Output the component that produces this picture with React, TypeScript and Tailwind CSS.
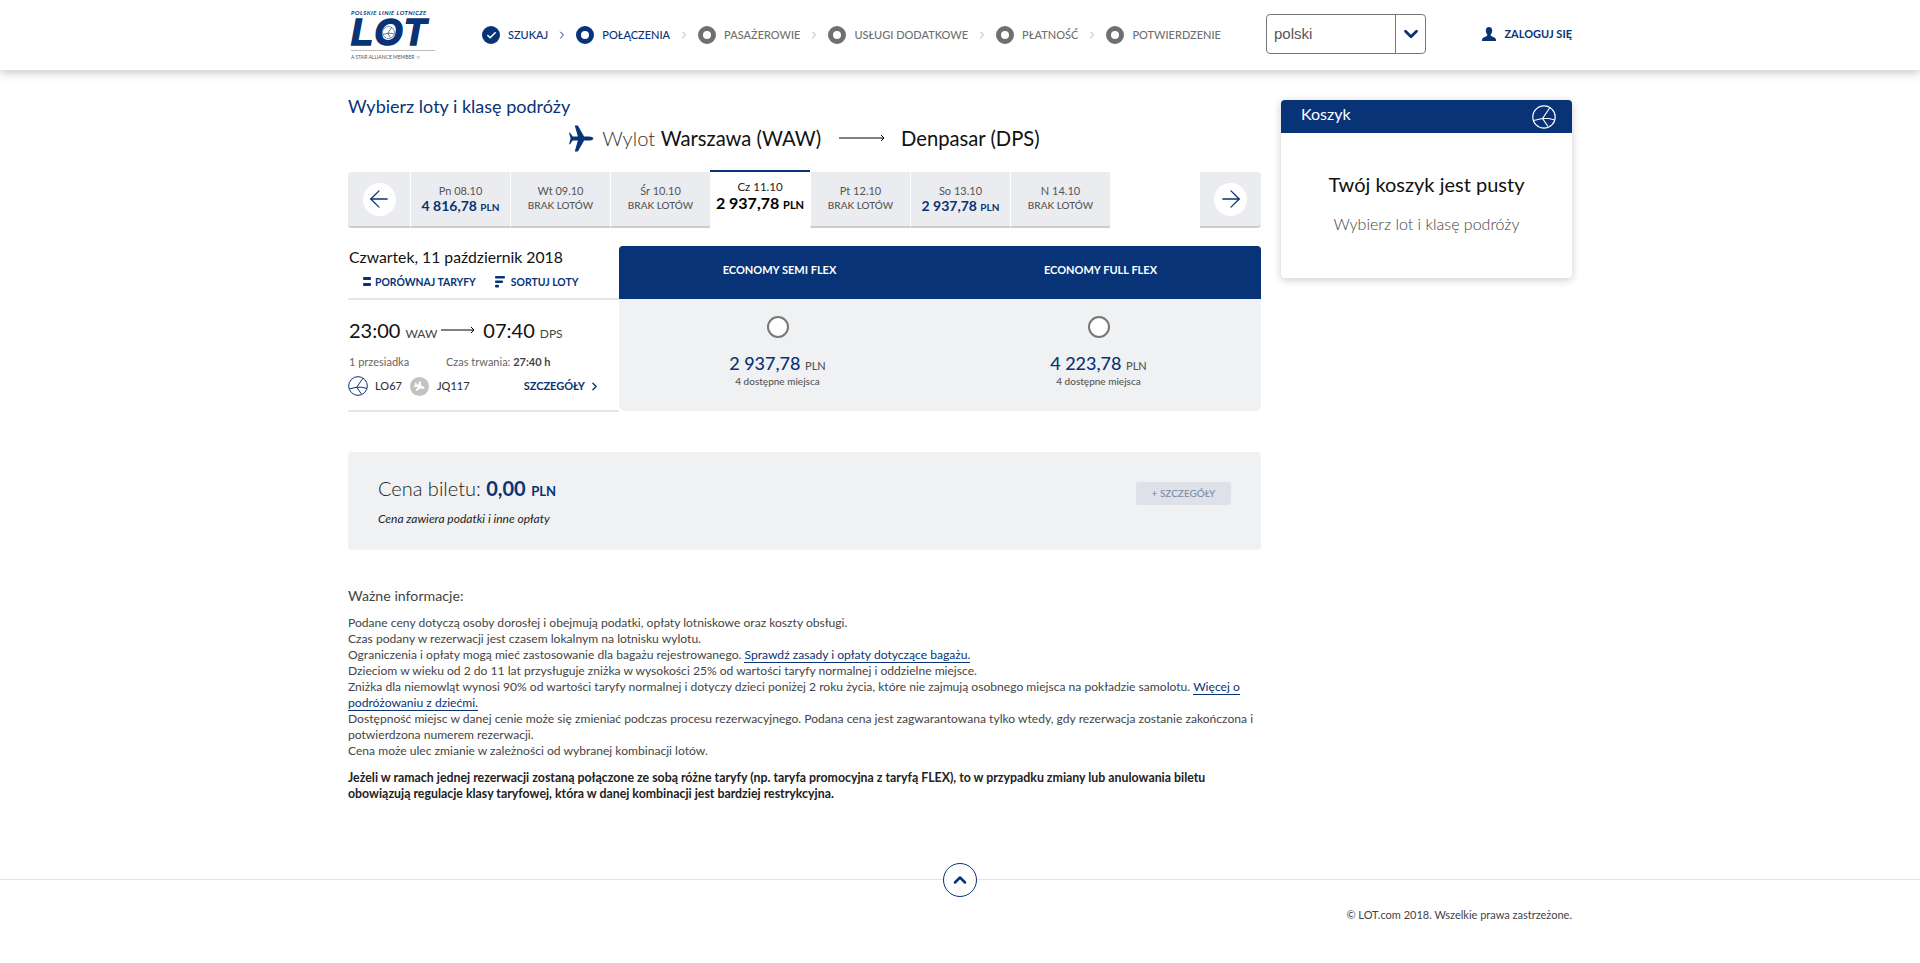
import React from 'react';
import { ArrowLeft, ArrowRight, ChevronDown, ChevronRight, ChevronUp, Check } from 'lucide-react';
import { FaPlane } from 'react-icons/fa';

const days = [
  { day: 'Pn 08.10', price: '4 816,78' },
  { day: 'Wt 09.10' },
  { day: 'Śr 10.10' },
  { day: 'Cz 11.10', price: '2 937,78', active: true },
  { day: 'Pt 12.10' },
  { day: 'So 13.10', price: '2 937,78' },
  { day: 'N 14.10' },
];

const steps = [
  { label: 'SZUKAJ', state: 'done' },
  { label: 'POŁĄCZENIA', state: 'current' },
  { label: 'PASAŻEROWIE', state: 'next' },
  { label: 'USŁUGI DODATKOWE', state: 'next' },
  { label: 'PŁATNOŚĆ', state: 'next' },
  { label: 'POTWIERDZENIE', state: 'next' },
];

const fares = [
  { price: '2 937,78' },
  { price: '4 223,78' },
];

const Crane = ({ className }: { className: string }) => (
  <svg viewBox="0 0 24 24" fill="none" stroke="currentColor" strokeWidth="1.2" className={className}>
    <circle cx="12" cy="12" r="11.2" />
    <path d="M18 2.5 L10.5 13.5 L1.5 15.5 M10.5 13.5 L17 13.5 L22.5 15 M10.5 13.5 L16 21.5" />
  </svg>
);

const Logo = () => (
  <div className="w-[84px] h-[54px] mt-[2px] flex flex-col text-[#083376]">
    <div className="h-[7px] text-[6px] leading-[7px] font-bold italic whitespace-nowrap tracking-[0.45px]">POLSKIE LINIE LOTNICZE</div>
    <div className="relative h-[27px] mt-[1px] font-['Liberation_Sans',sans-serif] text-[36px] leading-[31px] font-bold italic whitespace-nowrap [-webkit-text-stroke:1.6px_#083376] tracking-[1.5px]">
      LOT
      <Crane className="absolute left-[31px] top-[9px] w-[13px] h-[13px] rounded-full bg-white text-[#083376]" />
    </div>
    <div className="mt-[6px] border-t border-[#bbbbbb] pt-[3px] text-[5px] leading-[6px] text-[#555555] whitespace-nowrap">A STAR ALLIANCE MEMBER ☆</div>
  </div>
);

const Header = () => (
  <header className="h-[70px] bg-white shadow-[0_2px_10px_rgba(0,0,0,0.25)] relative">
    <div className="w-[1224px] mx-auto h-full flex items-center">
      <div className="ml-[3px] mr-[47px]"><Logo /></div>
      <nav className="flex items-center w-[784px]">
        {steps.map((s, i) => (
          <React.Fragment key={s.label}>
            {i > 0 && (
              <ChevronRight
                size={12}
                strokeWidth={2}
                className={`mx-[8px] ${s.state === 'next' ? 'text-[#b0b0b0]' : 'text-[#083376]'}`}
              />
            )}
            {s.state === 'done' ? (
              <span className="w-[18px] h-[18px] rounded-full bg-[#083376] flex items-center justify-center">
                <Check size={11} strokeWidth={3.5} className="text-white" />
              </span>
            ) : (
              <span className={`w-[18px] h-[18px] rounded-full bg-white border-[5px] ${s.state === 'current' ? 'border-[#083376]' : 'border-[#6f6f6f]'}`} />
            )}
            <span className={`ml-[8px] text-[11px] font-medium whitespace-nowrap ${s.state === 'next' ? 'text-[#6f6f6f]' : 'text-[#083376]'}`}>{s.label}</span>
          </React.Fragment>
        ))}
      </nav>
      <div className="w-[160px] h-[40px] mb-[2px] border border-[#777777] rounded-[4px] flex items-center">
        <span className="flex-1 pl-[7px] font-['Liberation_Sans',sans-serif] text-[15px] text-[#555555]">polski</span>
        <span className="w-[30px] h-full border-l border-[#777777] flex items-center justify-center">
          <ChevronDown size={22} strokeWidth={3} className="text-[#083376]" />
        </span>
      </div>
      <div className="ml-auto flex items-center gap-[8px] pb-[2px]">
        <svg viewBox="0 0 14 14" className="w-[14px] h-[14px] text-[#083376]" fill="currentColor">
          <path d="M7 0 C9 0 10.2 1.4 10.2 3.6 C10.2 5.4 9.4 7 8.6 7.8 C8.6 8.8 9 9 10.6 9.8 C12.6 10.6 14 11.2 14 13 V14 H0 V13 C0 11.2 1.4 10.6 3.4 9.8 C5 9 5.4 8.8 5.4 7.8 C4.6 7 3.8 5.4 3.8 3.6 C3.8 1.4 5 0 7 0 Z" />
        </svg>
        <span className="text-[11px] font-bold text-[#083376]">ZALOGUJ SIĘ</span>
      </div>
    </div>
  </header>
);

const DateTabs = () => (
  <div className="flex h-[56px] mt-[19px]">
    <div className="w-[62px] bg-[#ebecef] border-b-2 border-[#cbccd2] rounded-l-[4px] flex items-center justify-center">
      <span className="w-[33px] h-[33px] rounded-full bg-white flex items-center justify-center">
        <ArrowLeft size={28} strokeWidth={1.1} className="text-[#083376]" />
      </span>
    </div>
    {days.map(d => (
      <div
        key={d.day}
        className={`w-[100px] flex flex-col items-center ${d.active ? 'bg-white border-t-2 border-[#083376] -mt-[2px] h-[58px] pt-[8px]' : 'bg-[#ebecef] border-b-2 border-l border-[#cbccd2] border-l-white pt-[12px]'}`}
      >
        <span className={`leading-[14px] ${d.active ? 'text-[11.5px] text-[#222222]' : 'text-[11px] text-[#555555]'}`}>{d.day}</span>
        {d.price ? (
          <span className={`font-bold whitespace-nowrap ${d.active ? 'text-[16px] leading-[17px] text-black' : 'text-[14px] leading-[15px] text-[#083376]'}`}>
            {d.price} <span className={d.active ? 'text-[11px]' : 'text-[10px]'}>PLN</span>
          </span>
        ) : (
          <span className="text-[10px] leading-[15px] font-medium text-[#555555]">BRAK LOTÓW</span>
        )}
      </div>
    ))}
    <div className="ml-auto w-[61px] bg-[#ebecef] border-b-2 border-[#cbccd2] rounded-r-[4px] flex items-center justify-center">
      <span className="w-[33px] h-[33px] rounded-full bg-white flex items-center justify-center">
        <ArrowRight size={28} strokeWidth={1.1} className="text-[#083376]" />
      </span>
    </div>
  </div>
);

const FlightRow = () => (
  <div className="flex mt-[18px]">
    <div className="w-[271px]">
      <div className="h-[54px] border-b-2 border-[#e6e7ec] pt-[1px]">
        <div className="pl-[1px] text-[15.75px] leading-[20px] text-[#111111]">Czwartek, 11 październik 2018</div>
        <div className="flex mt-[8px] pl-[15px] gap-[19px] text-[10.4px] leading-[14px] font-bold text-[#083376]">
          <span className="flex items-center gap-[4px]">
            <svg viewBox="0 0 8 10" className="w-[8px] h-[10px]" fill="currentColor"><rect width="8" height="3" rx="1" /><rect y="6" width="8" height="3" rx="1" /></svg>
            PORÓWNAJ TARYFY
          </span>
          <span className="flex items-center gap-[6px]">
            <svg viewBox="0 0 10 12" className="w-[10px] h-[12px]" fill="currentColor"><rect width="10" height="2.6" rx="1" /><rect y="4.4" width="8" height="2.6" rx="1" /><rect y="8.8" width="4" height="2.6" rx="1" /></svg>
            SORTUJ LOTY
          </span>
        </div>
      </div>
      <div className="h-[112px] border-b-2 border-[#e6e7ec] pt-[17px]">
        <div className="flex items-baseline text-[#111111]">
          <span className="pl-[1px] text-[20px] leading-[26px]">23:00</span>
          <span className="ml-[5px] text-[12px] text-[#444444]">WAW</span>
          <svg viewBox="0 0 34 8" className="w-[34px] h-[8px] mx-[4px] self-center text-black" fill="none" stroke="currentColor"><path d="M0 4 H33 M30 1 L33 4 L30 7" /></svg>
          <span className="ml-[4px] text-[20px] leading-[26px]">07:40</span>
          <span className="ml-[5px] text-[12px] text-[#444444]">DPS</span>
        </div>
        <div className="flex mt-[12px] text-[11px] leading-[14px] text-[#666666]">
          <span className="w-[98px] pl-[1px]">1 przesiadka</span>
          <span>Czas trwania: <span className="font-bold text-[#444444]">27:40 h</span></span>
        </div>
        <div className="flex items-center mt-[7px] text-[11px] font-medium text-[#333333]">
          <Crane className="w-[20px] h-[20px] text-[#083376]" />
          <span className="ml-[7px]">LO67</span>
          <span className="ml-[8px] w-[19px] h-[19px] rounded-full bg-[#c2c2c2] flex items-center justify-center">
            <FaPlane size={11} className="text-white rotate-[20deg]" />
          </span>
          <span className="ml-[8px]">JQ117</span>
          <span className="ml-auto mr-[18px] flex items-center gap-[3px] font-bold text-[#083376]">
            SZCZEGÓŁY <ChevronRight size={13} strokeWidth={2.5} />
          </span>
        </div>
      </div>
    </div>
    <div className="flex-1">
      <div className="h-[53px] bg-[#083376] rounded-t-[4px] grid grid-cols-2 items-center text-center pb-[5px] text-[11px] font-bold text-white">
        <span>ECONOMY SEMI FLEX</span>
        <span>ECONOMY FULL FLEX</span>
      </div>
      <div className="h-[112px] bg-[#f0f1f3] rounded-b-[6px] grid grid-cols-2 text-center">
        {fares.map(f => (
          <div key={f.price} className="flex flex-col items-center pt-[17px] pr-[4px]">
            <span className="w-[22px] h-[22px] rounded-full border-2 border-[#777777] bg-white" />
            <span className="mt-[15px] text-[18px] leading-[20px] text-[#083376] font-medium whitespace-nowrap">
              {f.price} <span className="text-[11px] text-[#555555]">PLN</span>
            </span>
            <span className="-mt-[1px] text-[10px] leading-[12px] font-medium text-[#555555]">4 dostępne miejsca</span>
          </div>
        ))}
      </div>
    </div>
  </div>
);

const PriceBox = () => (
  <div className="mt-[40px] h-[98px] bg-[#f0f1f3] rounded-[4px] flex justify-between pl-[30px] pr-[30px] pt-[24px]">
    <div>
      <div className="text-[20px] leading-[24px] font-light text-[#222222]">
        Cena biletu: <span className="font-bold text-[#083376]">0,00</span> <span className="text-[13px] font-bold text-[#083376]">PLN</span>
      </div>
      <div className="mt-[8px] text-[12px] leading-[16px] italic text-[#222222]">Cena zawiera podatki i inne opłaty</div>
    </div>
    <div className="w-[95px] h-[23px] mt-[6px] bg-[#dfe1e8] rounded-[3px] flex items-center justify-center text-[10px] font-medium text-[#7d8aa5]">+ SZCZEGÓŁY</div>
  </div>
);

const Info = () => (
  <div className="mt-[37px] text-[#444444]">
    <h3 className="text-[14.2px] leading-[18px] text-[#444444]">Ważne informacje:</h3>
    <div className="mt-[10px] text-[12.1px] leading-[16px]">
      Podane ceny dotyczą osoby dorosłej i obejmują podatki, opłaty lotniskowe oraz koszty obsługi.<br />
      Czas podany w rezerwacji jest czasem lokalnym na lotnisku wylotu.<br />
      Ograniczenia i opłaty mogą mieć zastosowanie dla bagażu rejestrowanego. <a className="text-[#083376] border-b border-[#083376]">Sprawdź zasady i opłaty dotyczące bagażu.</a><br />
      Dzieciom w wieku od 2 do 11 lat przysługuje zniżka w wysokości 25% od wartości taryfy normalnej i oddzielne miejsce.<br />
      Zniżka dla niemowląt wynosi 90% od wartości taryfy normalnej i dotyczy dzieci poniżej 2 roku życia, które nie zajmują osobnego miejsca na pokładzie samolotu. <a className="text-[#083376] border-b border-[#083376]">Więcej o</a> <a className="text-[#083376] border-b border-[#083376]">podróżowaniu z dziećmi.</a><br />
      Dostępność miejsc w danej cenie może się zmieniać podczas procesu rezerwacyjnego. Podana cena jest zagwarantowana tylko wtedy, gdy rezerwacja zostanie zakończona i potwierdzona numerem rezerwacji.<br />
      Cena może ulec zmianie w zależności od wybranej kombinacji lotów.
    </div>
    <p className="mt-[11px] text-[12.35px] leading-[16px] font-bold text-[#222222]">
      Jeżeli w ramach jednej rezerwacji zostaną połączone ze sobą różne taryfy (np. taryfa promocyjna z taryfą FLEX), to w przypadku zmiany lub anulowania biletu obowiązują regulacje klasy taryfowej, która w danej kombinacji jest bardziej restrykcyjna.
    </p>
  </div>
);

const Basket = () => (
  <aside className="w-[291px] h-[178px] mt-[30px] rounded-[4px] bg-white shadow-[0_2px_8px_rgba(0,0,0,0.2)]">
    <div className="h-[33px] bg-[#083376] rounded-t-[4px] flex items-center justify-between pl-[20px] pr-[16px] text-white">
      <span className="text-[16px] leading-[28px] pb-[5px]">Koszyk</span>
      <Crane className="w-[24px] h-[24px]" />
    </div>
    <div className="text-center pt-[38px]">
      <div className="text-[20px] leading-[26px] text-[#111111]">Twój koszyk jest pusty</div>
      <div className="mt-[17px] text-[16px] leading-[20px] font-light text-[#444444]">Wybierz lot i klasę podróży</div>
    </div>
  </aside>
);

export default function App() {
  return (
    <div className="min-h-[963px] bg-white font-['Lato',sans-serif]">
      <Header />
      <main className="w-[1224px] mx-auto flex justify-between">
        <section className="w-[913px] pt-[25px]">
          <h1 className="text-[18px] leading-[22px] text-[#083376]">Wybierz loty i klasę podróży</h1>
          <div className="flex items-center justify-center mt-[6px] h-[30px] text-[20.2px] text-[#111111]">
            <svg viewBox="0 0 24 26" className="w-[25px] h-[27px] text-[#083376] mr-[8px]" fill="currentColor">
              <path d="M23.5 13 C23.5 11.8 21 11 19 11 L14.5 11 L8.5 0.5 H5.5 L8.5 11 H3.5 L1 7.5 H0 L1.5 13 L0 18.5 H1 L3.5 15 H8.5 L5.5 25.5 H8.5 L14.5 15 H19 C21 15 23.5 14.2 23.5 13 Z" />
            </svg>
            <span className="font-light text-[#333333]">Wylot&nbsp;</span>
            <span>Warszawa (WAW)</span>
            <svg viewBox="0 0 46 8" className="w-[46px] h-[8px] ml-[18px] mr-[16px] text-black" fill="none" stroke="currentColor"><path d="M0 4 H45 M42 1 L45 4 L42 7" /></svg>
            <span>Denpasar (DPS)</span>
          </div>
          <DateTabs />
          <FlightRow />
          <PriceBox />
          <Info />
        </section>
        <Basket />
      </main>
      <footer className="relative mt-[77px] border-t border-[#e2e5ee]">
        <span className="absolute left-1/2 -translate-x-1/2 -top-[17px] w-[34px] h-[34px] rounded-full border border-[#083376] bg-white flex items-center justify-center">
          <ChevronUp size={20} strokeWidth={3} className="text-[#083376]" />
        </span>
        <div className="w-[1224px] mx-auto pt-[27px] text-right text-[11px] leading-[16px] text-[#444444]">© LOT.com 2018. Wszelkie prawa zastrzeżone.</div>
      </footer>
    </div>
  );
}
